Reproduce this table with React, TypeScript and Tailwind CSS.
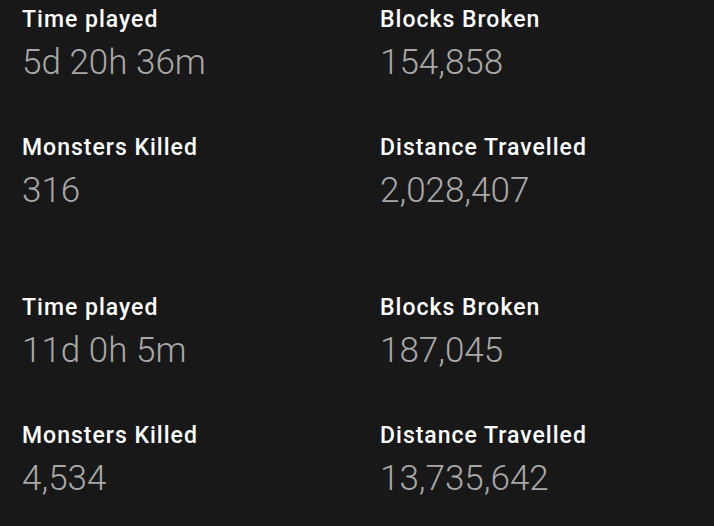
const groups = [
  [
    { label: 'Time played', value: '5d 20h 36m' },
    { label: 'Blocks Broken', value: '154,858' },
    { label: 'Monsters Killed', value: '316' },
    { label: 'Distance Travelled', value: '2,028,407' },
  ],
  [
    { label: 'Time played', value: '11d 0h 5m' },
    { label: 'Blocks Broken', value: '187,045' },
    { label: 'Monsters Killed', value: '4,534' },
    { label: 'Distance Travelled', value: '13,735,642' },
  ],
];

function Stat({ label, value }: { label: string; value: string }) {
  return (
    <div className="flex flex-col">
      <span className="text-[23px] leading-[28px] font-medium tracking-[1px] text-white">{label}</span>
      <span className="mt-[7px] text-[35px] leading-[44px] font-light text-[#a8a8a8]">{value}</span>
    </div>
  );
}

export default function App() {
  return (
    <div
      className="flex h-[526px] w-[714px] flex-col gap-[81px] overflow-hidden bg-[#181818] pl-[22px] pt-[6px]"
      style={{ fontFamily: 'Roboto, "Noto Sans", sans-serif' }}
    >
      {groups.map((stats, i) => (
        <div key={i} className="grid grid-cols-[358px_1fr] gap-y-[49px]">
          {stats.map((s, j) => (
            <Stat key={j} label={s.label} value={s.value} />
          ))}
        </div>
      ))}
    </div>
  );
}
